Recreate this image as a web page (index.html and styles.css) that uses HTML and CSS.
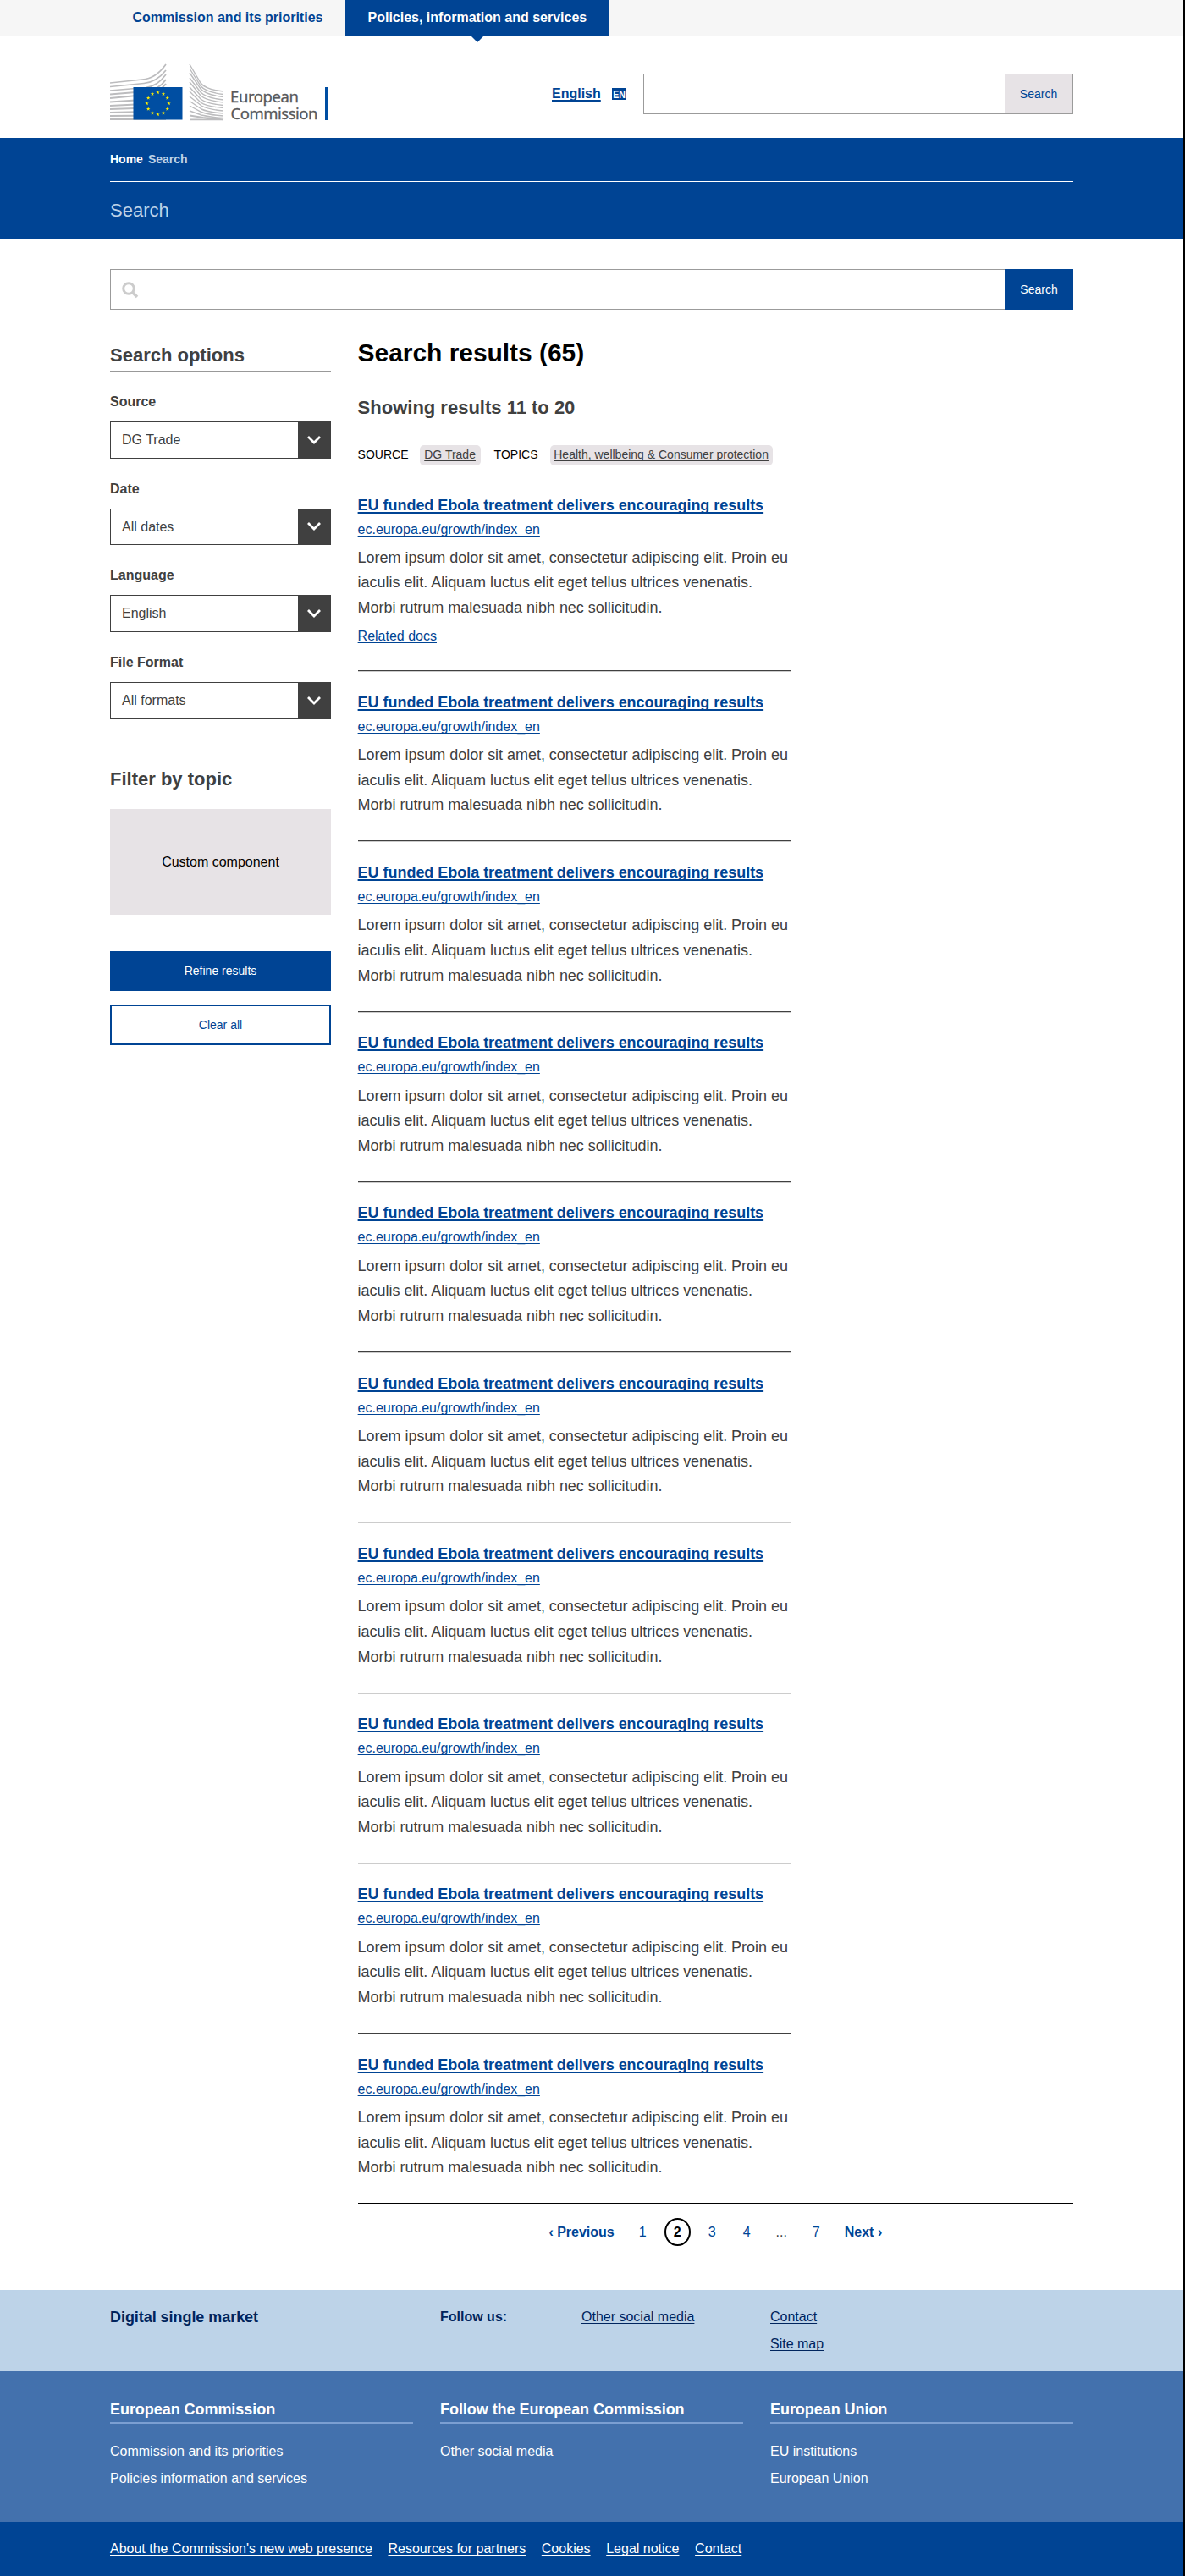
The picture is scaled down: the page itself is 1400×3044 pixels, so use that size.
FILE: index.html
```html
<!DOCTYPE html>
<html lang="en">
<head>
<meta charset="utf-8">
<title>Search - European Commission</title>
<link rel="stylesheet" href="styles.css">
</head>
<body>
<nav class="topbar">
  <div class="container topbar-tabs">
    <a class="tab" href="#">Commission and its priorities</a>
    <a class="tab tab-active" href="#">Policies, information and services</a>
  </div>
</nav>

<header class="header">
  <div class="container header-row">
    <svg class="logo" viewBox="0 0 260 70" width="260" height="70" role="img" aria-label="European Commission">
      <g fill="none" stroke="#bcbcbe" stroke-width="2">
        <path d="M0 23 L38 19 Q54 18 66 1" stroke-width="1.7"/>
        <path d="M0 27.5 L40 23.5 Q55 22 66 8" stroke-width="1.7"/>
        <path d="M0 32 L42 28.500 Q56 27 66 13" stroke-width="1.7"/>
        <path d="M0 36.500 L42 33 Q58 31 66 19"/>
        <path d="M0 41 L42 37 Q58 35 66 24"/>
        <path d="M0 45.500 L30 43.500M0 50 L30 48.500M0 54 L30 53M0 58 L30 57.300M0 62 L30 61.700M0 66 H66"/>
      </g>
      <g fill="none" stroke="#bcbcbe" stroke-width="1.400">
        <path d="M94 1 L107 23 Q113 31 134 33"/>
        <path d="M94 6 L107 26.500 Q113 34 134 36.500"/>
        <path d="M94 11 L107 30 Q113 37 134 39.500"/>
        <path d="M94 17 L107 34 Q114 41 134 43"/>
        <path d="M94 22 L107 38 Q114 44 134 46"/>
        <path d="M94 28 L107 42 Q114 47.500 134 49.500"/>
        <path d="M94 33 L107 46 Q114 51 134 52.500"/>
        <path d="M94 39 L108 50 Q116 54.500 134 56"/>
        <path d="M94 44.500 L108 54 Q117 58 134 59"/>
        <path d="M94 50 L108 57.500 Q118 61 134 62"/>
        <path d="M94 56 L108 61 Q118 63.500 134 64.500"/>
        <path d="M94 61.500 L110 64 L134 66.500M94 66.300 H134" stroke-width="1.800"/>
      </g>
      <rect x="27.500" y="28" width="58" height="38.500" fill="#004ea2"/>
      <defs>
        <polygon id="star" points="0,-2.400 0.560,-0.780 2.280,-0.740 0.910,0.300 1.410,1.940 0,0.960 -1.410,1.940 -0.910,0.300 -2.280,-0.740 -0.560,-0.780"/>
      </defs>
      <g fill="#ffed00">
        <use href="#star" x="56.500" y="34.300"/><use href="#star" x="63" y="36"/>
        <use href="#star" x="67.800" y="40.800"/><use href="#star" x="69.500" y="47.300"/>
        <use href="#star" x="67.800" y="53.800"/><use href="#star" x="63" y="58.600"/>
        <use href="#star" x="56.500" y="60.300"/><use href="#star" x="50" y="58.600"/>
        <use href="#star" x="45.200" y="53.800"/><use href="#star" x="43.500" y="47.300"/>
        <use href="#star" x="45.200" y="40.800"/><use href="#star" x="50" y="36"/>
      </g>
      <g class="logo-text">
        <text x="142" y="45.500" textLength="81">European</text>
        <text x="142.500" y="66" textLength="103">Commission</text>
      </g>
      <rect x="254" y="28" width="3.700" height="39" fill="#004ea2"/>
    </svg>
    <div class="language">
      <a class="language-link" href="#">English</a>
      <svg class="language-code" width="17" height="14" viewBox="0 0 17 14"><rect width="17" height="14" fill="#004494"/><text x="1.200" y="11.500" textLength="14.600" lengthAdjust="spacingAndGlyphs">EN</text></svg>
    </div>
    <form class="search-box header-search">
      <input class="search-input" type="text" aria-label="Search">
      <button class="search-button search-button-light" type="button">Search</button>
    </form>
  </div>
</header>

<section class="banner">
  <div class="container">
    <div class="breadcrumb"><a class="breadcrumb-home" href="#">Home</a><span>Search</span></div>
    <div class="banner-title">Search</div>
  </div>
</section>

<main class="container">
  <form class="search-box main-search">
    <svg class="search-icon" width="20" height="20" viewBox="0 0 20 20" fill="none" stroke="#ccc"><circle cx="8" cy="8" r="6.300" stroke-width="3"/><path d="M12.500 12.500 L18 18" stroke-width="3.600"/></svg>
    <input class="search-input" type="text" aria-label="Search">
    <button class="search-button" type="button">Search</button>
  </form>

  <div class="columns">
    <aside class="sidebar">
      <h2 class="side-title">Search options</h2>
      <div class="field"><div class="label">Source</div><div class="select"><span class="select-value">DG Trade</span><span class="select-arrow"><svg width="18" height="12" viewBox="0 0 18 12"><path d="M2 2 L9 9 L16 2"/></svg></span></div></div>
      <div class="field"><div class="label">Date</div><div class="select"><span class="select-value">All dates</span><span class="select-arrow"><svg width="18" height="12" viewBox="0 0 18 12"><path d="M2 2 L9 9 L16 2"/></svg></span></div></div>
      <div class="field"><div class="label">Language</div><div class="select"><span class="select-value">English</span><span class="select-arrow"><svg width="18" height="12" viewBox="0 0 18 12"><path d="M2 2 L9 9 L16 2"/></svg></span></div></div>
      <div class="field"><div class="label">File Format</div><div class="select"><span class="select-value">All formats</span><span class="select-arrow"><svg width="18" height="12" viewBox="0 0 18 12"><path d="M2 2 L9 9 L16 2"/></svg></span></div></div>
      <h2 class="side-title side-title-filter">Filter by topic</h2>
      <div class="custom">Custom component</div>
      <button class="button button-primary" type="button">Refine results</button>
      <button class="button button-outline" type="button">Clear all</button>
    </aside>

    <section class="results">
      <h1 class="results-title">Search results (65)</h1>
      <h2 class="results-range">Showing results 11 to 20</h2>
      <div class="tags">
        <span class="tag-label">SOURCE</span><a class="tag" href="#">DG Trade</a>
        <span class="tag-label tag-label-next">TOPICS</span><a class="tag tag-long" href="#">Health, wellbeing &amp; Consumer protection</a>
      </div>

      <article class="item">
        <h3 class="item-title"><a href="#">EU funded Ebola treatment delivers encouraging results</a></h3>
        <div class="item-url"><a href="#">ec.europa.eu/growth/index_en</a></div>
        <p class="item-text">Lorem ipsum dolor sit amet, consectetur adipiscing elit. Proin eu<br>iaculis elit. Aliquam luctus elit eget tellus ultrices venenatis.<br>Morbi rutrum malesuada nibh nec sollicitudin.</p>
        <div class="item-related"><a href="#">Related docs</a></div>
      </article>
      <article class="item">
        <h3 class="item-title"><a href="#">EU funded Ebola treatment delivers encouraging results</a></h3>
        <div class="item-url"><a href="#">ec.europa.eu/growth/index_en</a></div>
        <p class="item-text">Lorem ipsum dolor sit amet, consectetur adipiscing elit. Proin eu<br>iaculis elit. Aliquam luctus elit eget tellus ultrices venenatis.<br>Morbi rutrum malesuada nibh nec sollicitudin.</p>
      </article>
      <article class="item">
        <h3 class="item-title"><a href="#">EU funded Ebola treatment delivers encouraging results</a></h3>
        <div class="item-url"><a href="#">ec.europa.eu/growth/index_en</a></div>
        <p class="item-text">Lorem ipsum dolor sit amet, consectetur adipiscing elit. Proin eu<br>iaculis elit. Aliquam luctus elit eget tellus ultrices venenatis.<br>Morbi rutrum malesuada nibh nec sollicitudin.</p>
      </article>
      <article class="item">
        <h3 class="item-title"><a href="#">EU funded Ebola treatment delivers encouraging results</a></h3>
        <div class="item-url"><a href="#">ec.europa.eu/growth/index_en</a></div>
        <p class="item-text">Lorem ipsum dolor sit amet, consectetur adipiscing elit. Proin eu<br>iaculis elit. Aliquam luctus elit eget tellus ultrices venenatis.<br>Morbi rutrum malesuada nibh nec sollicitudin.</p>
      </article>
      <article class="item">
        <h3 class="item-title"><a href="#">EU funded Ebola treatment delivers encouraging results</a></h3>
        <div class="item-url"><a href="#">ec.europa.eu/growth/index_en</a></div>
        <p class="item-text">Lorem ipsum dolor sit amet, consectetur adipiscing elit. Proin eu<br>iaculis elit. Aliquam luctus elit eget tellus ultrices venenatis.<br>Morbi rutrum malesuada nibh nec sollicitudin.</p>
      </article>
      <article class="item">
        <h3 class="item-title"><a href="#">EU funded Ebola treatment delivers encouraging results</a></h3>
        <div class="item-url"><a href="#">ec.europa.eu/growth/index_en</a></div>
        <p class="item-text">Lorem ipsum dolor sit amet, consectetur adipiscing elit. Proin eu<br>iaculis elit. Aliquam luctus elit eget tellus ultrices venenatis.<br>Morbi rutrum malesuada nibh nec sollicitudin.</p>
      </article>
      <article class="item">
        <h3 class="item-title"><a href="#">EU funded Ebola treatment delivers encouraging results</a></h3>
        <div class="item-url"><a href="#">ec.europa.eu/growth/index_en</a></div>
        <p class="item-text">Lorem ipsum dolor sit amet, consectetur adipiscing elit. Proin eu<br>iaculis elit. Aliquam luctus elit eget tellus ultrices venenatis.<br>Morbi rutrum malesuada nibh nec sollicitudin.</p>
      </article>
      <article class="item">
        <h3 class="item-title"><a href="#">EU funded Ebola treatment delivers encouraging results</a></h3>
        <div class="item-url"><a href="#">ec.europa.eu/growth/index_en</a></div>
        <p class="item-text">Lorem ipsum dolor sit amet, consectetur adipiscing elit. Proin eu<br>iaculis elit. Aliquam luctus elit eget tellus ultrices venenatis.<br>Morbi rutrum malesuada nibh nec sollicitudin.</p>
      </article>
      <article class="item">
        <h3 class="item-title"><a href="#">EU funded Ebola treatment delivers encouraging results</a></h3>
        <div class="item-url"><a href="#">ec.europa.eu/growth/index_en</a></div>
        <p class="item-text">Lorem ipsum dolor sit amet, consectetur adipiscing elit. Proin eu<br>iaculis elit. Aliquam luctus elit eget tellus ultrices venenatis.<br>Morbi rutrum malesuada nibh nec sollicitudin.</p>
      </article>
      <article class="item">
        <h3 class="item-title"><a href="#">EU funded Ebola treatment delivers encouraging results</a></h3>
        <div class="item-url"><a href="#">ec.europa.eu/growth/index_en</a></div>
        <p class="item-text">Lorem ipsum dolor sit amet, consectetur adipiscing elit. Proin eu<br>iaculis elit. Aliquam luctus elit eget tellus ultrices venenatis.<br>Morbi rutrum malesuada nibh nec sollicitudin.</p>
      </article>

      <nav class="pager">
        <a class="pager-step" href="#">‹ Previous</a>
        <span class="pager-pages">
          <a href="#">1</a><span class="pager-current"><b>2</b></span><a href="#">3</a><a href="#">4</a><span class="pager-dots">...</span><a href="#">7</a>
        </span>
        <a class="pager-step" href="#">Next ›</a>
      </nav>
    </section>
  </div>
</main>

<footer>
  <div class="footer-site">
    <div class="container footer-grid">
      <div class="footer-name">Digital single market</div>
      <div class="footer-follow"><b>Follow us:</b><a href="#">Other social media</a></div>
      <div class="footer-links"><a href="#">Contact</a><a href="#">Site map</a></div>
    </div>
  </div>
  <div class="footer-mid">
    <div class="container footer-grid">
      <div><h4 class="footer-heading">European Commission</h4><div class="footer-links"><a href="#">Commission and its priorities</a><a href="#">Policies information and services</a></div></div>
      <div><h4 class="footer-heading">Follow the European Commission</h4><div class="footer-links"><a href="#">Other social media</a></div></div>
      <div><h4 class="footer-heading">European Union</h4><div class="footer-links"><a href="#">EU institutions</a><a href="#">European Union</a></div></div>
    </div>
  </div>
  <div class="footer-bottom">
    <div class="container footer-bar">
      <a href="#">About the Commission's new web presence</a><a href="#">Resources for partners</a><a href="#">Cookies</a><a href="#">Legal notice</a><a href="#">Contact</a>
    </div>
  </div>
</footer>
</body>
</html>
```
FILE: styles.css
```css
* { box-sizing: border-box; }

body {
  margin: 0;
  border-right: 2px solid #000;
  background: #fff;
  color: #404040;
  font: 16px/24px "Liberation Sans", Arial, sans-serif;
}

h1, h2, h3, h4, p { margin: 0; }

a {
  color: #004494;
  text-decoration: underline 1px;
  text-decoration-skip-ink: none;
  text-underline-offset: 2px;
}

button, input { font-family: inherit; }

.container { width: 1138px; margin: 0 auto; }

/* Top navigation */
.topbar { height: 43px; background: #f6f6f6; }
.topbar-tabs { display: flex; }
.tab {
  padding: 0 25px 0 26.500px;
  height: 42px;
  line-height: 41px;
  font-weight: bold;
  text-decoration: none;
  white-space: nowrap;
}
.tab:first-child { width: 278px; }
.tab-active { position: relative; width: 312px; background: #004494; color: #fff; }
.tab-active::after {
  content: "";
  position: absolute;
  top: 42px;
  left: 148px;
  border: 8px solid transparent;
  border-top-color: #004494;
  border-bottom: 0;
}

/* Header */
.header { height: 120px; padding-top: 32px; }
.header-row { display: flex; align-items: flex-start; }
.logo { display: block; }
.logo-text { font: 18.500px "Noto Sans", "Open Sans", sans-serif; fill: #58595b; stroke: #58595b; stroke-width: .3px; }
.language { display: flex; align-items: center; gap: 13px; margin: 24px 0 0 262px; }
.language-link {
  width: 58px;
  font-weight: bold;
  text-decoration-thickness: 2px;
}
.language-code { display: block; overflow: visible; }
.language-code text { font: bold 12.500px "Liberation Sans", Arial, sans-serif; fill: #fff; }
.search-box { display: flex; height: 48px; border: 1px solid #9b9b9b; margin: 0; }
.header-search { width: 508px; margin: 12px 0 0 auto; }
.search-input { flex: 1; min-width: 0; border: 0; background: none; }
.search-button {
  width: 80px;
  border: 0;
  padding: 0;
  background: #004494;
  color: #fff;
  font-size: 14px;
}
.search-button-light { background: #e7e3e6; color: #004494; }

/* Banner with breadcrumb */
.banner { height: 120px; background: #004494; color: #bdd3e8; }
.breadcrumb {
  display: flex;
  gap: 6px;
  height: 52px;
  padding-top: 13px;
  border-bottom: 1px solid #fff;
  font-size: 14px;
  font-weight: bold;
}
.breadcrumb-home { color: #fff; text-decoration: none; }
.banner-title { padding-top: 19px; font-size: 22px; line-height: 30px; }

/* Main search */
.main-search { margin-top: 35px; }
.main-search .search-button { width: 81px; margin: -1px; }
.search-icon { margin: 14px 0 0 13px; }

.columns { display: flex; align-items: flex-start; gap: 32px; }

/* Sidebar */
.sidebar { width: 261px; padding-top: 40px; }
.side-title {
  height: 33px;
  border-bottom: 1px solid #999;
  font-size: 22px;
  line-height: 28px;
}
.field { height: 102.700px; padding-top: 24px; }
.label { font-weight: bold; }
.select {
  display: flex;
  height: 43.500px;
  margin-top: 11px;
  border: 1px solid #404040;
}
.select-value { flex: 1; padding-left: 13px; line-height: 41px; }
.select-arrow {
  display: flex;
  align-items: center;
  justify-content: center;
  width: 38px;
  background: #404040;
}
.select-arrow path { fill: none; stroke: #fff; stroke-width: 2.800; }
.side-title-filter { margin-top: 57.200px; }
.custom {
  height: 125px;
  margin-top: 16px;
  background: #e7e3e6;
  color: #000;
  line-height: 125px;
  text-align: center;
}
.button { display: block; width: 100%; height: 47px; padding: 0; font-size: 14px; }
.button-primary { margin-top: 43px; border: 0; background: #004494; color: #fff; }
.button-outline { height: 48px; margin-top: 16px; border: 2px solid #004494; background: #fff; color: #004494; }

/* Results */
.results { flex: 1; margin-left: -.4px; padding-top: 33px; }
.results-title { color: #000; font-size: 30px; line-height: 36px; letter-spacing: -.05px; }
.results-range { margin-top: 33px; font-size: 22px; line-height: 28px; }
.tags { display: flex; height: 24px; margin-top: 30px; font-size: 14px; line-height: 23px; }
.tag-label { width: 73px; color: #000; }
.tag-label-next { width: 66px; margin-left: 16px; }
.tag {
  width: 72px;
  border-radius: 5px;
  background: #e7e3e6;
  color: #404040;
  text-align: center;
}
.tag-long { width: 263px; }

.item {
  width: 511px;
  height: 201.250px;
  padding-top: 24.700px;
  border-bottom: 1px solid #404040;
  box-shadow: 0 1px 0 #ccc;
}
.item:nth-of-type(1) { height: 243px; padding-top: 34.500px; }
.item:last-of-type { border-bottom-color: transparent; box-shadow: none; }
.item-title { font-size: 18px; line-height: 24px; letter-spacing: -.03px; white-space: nowrap; }
.item-title a { text-decoration-thickness: 2px; }
.item-url { margin-top: 5px; }
.item-text { margin-top: 7.400px; font-size: 18px; line-height: 29.600px; letter-spacing: -.03px; white-space: nowrap; }
.item-related { margin-top: 6.200px; }

.pager {
  display: flex;
  justify-content: center;
  height: 103px;
  margin-top: -1.250px;
  padding-top: 16px;
  border-top: 2px solid #000;
  line-height: 33px;
}
.pager a { text-decoration: none; }
.pager-step { font-weight: bold; }
.pager-pages { display: flex; width: 246px; margin: 0 13px; text-align: center; }
.pager-pages > * { width: 41px; }
.pager-current { padding: 0 5px; color: #000; }
.pager-current b { display: block; height: 33px; border: 2px solid #000; border-radius: 50%; line-height: 29px; }

/* Footer */
.footer-grid { display: grid; grid-template-columns: repeat(3, 1fr); column-gap: 32px; }
.footer-site { height: 96px; padding-top: 16px; background: #bdd3e8; color: #00245d; line-height: 32px; }
.footer-site a { color: #00245d; }
.footer-name { font-size: 18px; font-weight: bold; letter-spacing: -.05px; }
.footer-follow { display: flex; align-items: flex-start; }
.footer-follow b { width: 167px; }
.footer-links { display: flex; flex-direction: column; align-items: flex-start; line-height: 32px; }
.footer-mid { height: 178px; padding-top: 35px; background: #4371ad; color: #fff; }
.footer-mid a, .footer-bottom a { color: #fff; }
.footer-heading {
  height: 27px;
  margin-bottom: 17px;
  border-bottom: 2px solid #7b9fd2;
  font-size: 18px;
  line-height: 20px;
  letter-spacing: -.05px;
}
.footer-bottom { height: 64px; padding-top: 20px; background: #004494; }
.footer-bar { display: flex; gap: 18.600px; }
```
